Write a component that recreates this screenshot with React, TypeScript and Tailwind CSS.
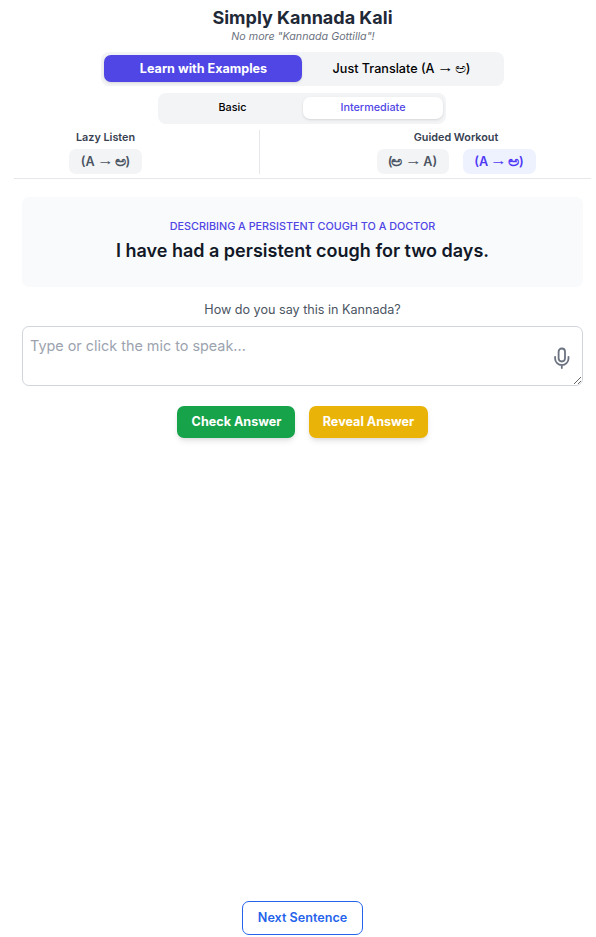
import type { ReactNode } from 'react';

const Arrow = () => (
  <span className="inline-block -translate-y-px scale-x-[1.15] font-['Liberation_Sans'] text-[1.15em] leading-none font-normal">→</span>
);
const KannadaA = () => <span className="inline-block origin-center scale-x-[1.12] scale-y-[0.92] text-[1.22em] leading-none">ಅ</span>;

function ModeButton({ active = false, className, children }: { active?: boolean; className: string; children: ReactNode }) {
  const tone = active ? 'bg-[#eef2ff] text-indigo-600' : 'bg-[#f3f4f6] text-[#4b5563]';
  return (
    <button className={`h-[25px] rounded-[7px] pt-px text-[12.6px] leading-[18px] font-semibold whitespace-nowrap ${tone} ${className}`}>
      {children}
    </button>
  );
}

export default function App() {
  return (
    <div className="flex h-[937px] w-[596px] flex-col overflow-hidden bg-white pr-[5px] pl-[14px] font-['Inter','Noto_Sans',sans-serif] text-black">
      <header className="flex flex-col items-center border-b border-[#e5e7eb]">
        <h1 className="mt-[5px] text-[18px] leading-[25px] font-bold text-[#1f2937]">Simply Kannada Kali</h1>
        <p className="pl-px text-[10.7px] leading-[13px] text-[#6b7280] italic">No more "Kannada Gottilla"!</p>

        <div className="mt-[9px] flex h-[34px] w-[403px] rounded-[8px] bg-[#f3f4f6] pt-[3px] pl-[3px] text-[12.6px] leading-[18px]">
          <button className="h-[27px] w-[198px] rounded-[7px] bg-[#4f46e5] pt-px pl-px font-bold text-white shadow-sm">
            Learn with Examples
          </button>
          <button className="h-[27px] w-[199px] font-medium">
            Just Translate (A <Arrow /> <KannadaA />)
          </button>
        </div>

        <div className="mt-[7px] mr-px flex h-[31px] w-[288px] rounded-[8px] bg-[#f3f4f6] pt-[4px] pl-[4px] text-[10.8px] font-medium">
          <button className="h-[22px] w-[141px] pt-px">Basic</button>
          <button className="h-[22px] w-[140px] rounded-[7px] bg-white pt-px text-[#4f46e5] shadow">Intermediate</button>
        </div>

        <div className="mt-[6px] flex h-[48px] w-full">
          <section className="flex w-[183px] flex-col items-center">
            <h2 className="pt-px text-[10.8px] leading-[14px] font-semibold text-[#374151]">Lazy Listen</h2>
            <ModeButton className="mt-[4px] w-[73px]">
              (A <Arrow /> <KannadaA />)
            </ModeButton>
          </section>
          <div className="ml-[62px] h-[44px] w-px bg-[#e5e7eb]" />
          <section className="ml-[61px] flex w-[270px] flex-col items-center">
            <h2 className="pt-px text-[10.8px] leading-[14px] font-semibold text-[#374151]">Guided Workout</h2>
            <div className="mt-[4px] flex gap-[14px]">
              <ModeButton className="w-[72px]">
                (<KannadaA /> <Arrow /> A)
              </ModeButton>
              <ModeButton active className="w-[73px]">
                (A <Arrow /> <KannadaA />)
              </ModeButton>
            </div>
          </section>
        </div>
      </header>

      <main className="flex flex-1 flex-col items-center px-[8px] pt-[18px]">
        <section className="flex h-[90px] w-full flex-col items-center rounded-[7px] bg-[#f9fafb] pt-[22px]">
          <p className="text-[10.8px] leading-[15px] font-medium text-[#4f46e5] uppercase">
            Describing a persistent cough to a doctor
          </p>
          <p className="mt-[4px] text-[18px] leading-[25px] font-semibold text-[#111827]">
            I have had a persistent cough for two days.
          </p>
        </section>

        <label htmlFor="answer" className="mt-[14px] text-[12.6px] leading-[18px] text-[#4b5563]">
          How do you say this in Kannada?
        </label>
        <div className="relative mt-[7px] h-[60px] w-full">
          <textarea
            id="answer"
            placeholder="Type or click the mic to speak..."
            className="h-[60px] w-full resize-y rounded-[7px] border border-[#d1d5db] px-[7px] py-[8px] text-[14.4px] leading-[22px] placeholder:text-[#9ca3af]"
          />
          <button aria-label="Speak" className="absolute top-[21px] right-[10px] text-[#6b7280]">
            <svg width="22" height="22" viewBox="0 0 22 22" fill="none" stroke="currentColor" strokeWidth="1.8" strokeLinecap="round" strokeLinejoin="round">
              <rect x="7.6" y="1.5" width="6.4" height="13" rx="3.2" />
              <path d="M4.1 9.8v1.6a6.7 6.7 0 0 0 13.4 0V9.8M10.8 18v3" />
            </svg>
          </button>
        </div>

        <div className="mt-[20px] flex gap-[14px] text-[12.6px] font-bold text-white">
          <button className="h-[32px] w-[118px] rounded-[7px] bg-[#16a34a] pl-px shadow-md">Check Answer</button>
          <button className="h-[32px] w-[119px] rounded-[7px] bg-[#eab308] shadow-md">Reveal Answer</button>
        </div>

        <button className="mt-auto mb-[2px] h-[34px] w-[121px] rounded-[7px] border border-[#2563eb] text-[12.6px] font-semibold text-[#2563eb]">
          Next Sentence
        </button>
      </main>
    </div>
  );
}
